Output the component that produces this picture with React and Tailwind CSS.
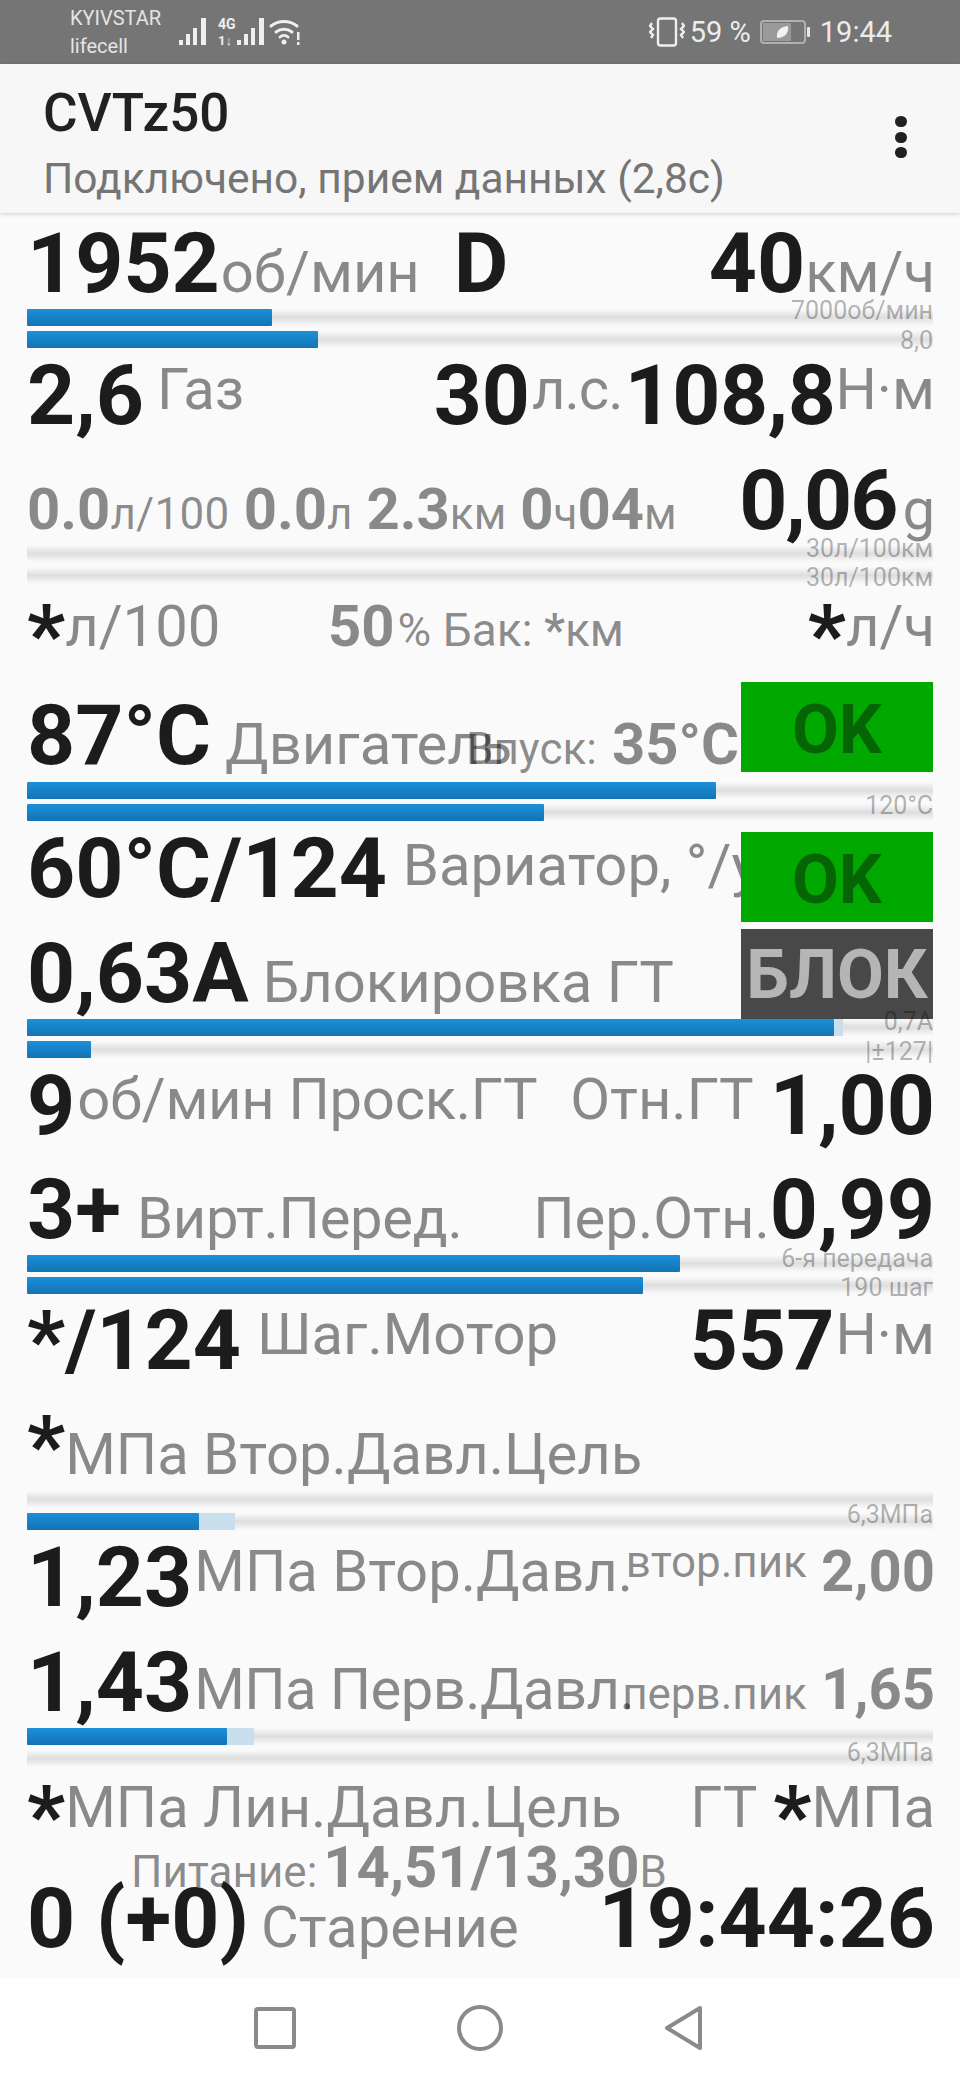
const Big = ({ children, className = "" }) => (
  <span className={`font-bold text-[84px] leading-[0] text-[#1c1c1c] ${className}`}>{children}</span>
);

const Unit = ({ children, className = "" }) => (
  <span className={`text-[58px] leading-[0] text-black/45 ${className}`}>{children}</span>
);

const Muted = ({ children, className = "" }) => (
  <span className={`font-bold text-[58px] leading-[0] text-black/45 ${className}`}>{children}</span>
);

const Small = ({ children, className = "" }) => (
  <span className={`text-[44px] leading-[0] text-black/45 ${className}`}>{children}</span>
);

const Row = ({ className = "", children }) => (
  <div
    className={`relative flex shrink-0 items-baseline justify-between whitespace-nowrap pl-[27px] pr-[25px] text-[84px] leading-[60px] ${className}`}
  >
    {children}
  </div>
);

const Status = ({ label, tone = "bg-[#00a800] text-[#056505] pt-[5px]", className = "" }) => (
  <div
    className={`absolute right-[27px] z-10 flex h-[90px] w-[192px] items-center justify-center text-[68px] font-bold leading-none ${tone} ${className}`}
  >
    {label}
  </div>
);

const Bar = ({ value, ghost, note, noteClass = "" }) => (
  <div className="relative h-[17px] bg-linear-to-b from-transparent via-[#dedede] to-transparent">
    {ghost ? (
      <div className="absolute inset-y-0 left-0 bg-[#c9dfee]" style={{ width: ghost }} />
    ) : null}
    {value ? (
      <div
        className="absolute inset-y-0 left-0 rounded-[1px] bg-linear-to-b from-[#1b90da] to-[#1473b4]"
        style={{ width: value }}
      />
    ) : null}
    {note ? (
      <span
        className={`absolute right-0 z-20 text-[25px] leading-none text-black/30 ${noteClass}`}
      >
        {note}
      </span>
    ) : null}
  </div>
);

const Bars = ({ children }) => (
  <div className="flex h-[39px] shrink-0 flex-col justify-between pl-[27px] pr-[27px]">{children}</div>
);

const StatusBar = () => (
  <div className="flex h-[64px] shrink-0 items-center justify-between bg-[#757575] pl-[70px] pr-[68px] text-[#ececec]">
    <div className="flex items-center">
      <div className="w-[108px] text-[20px] leading-[28px] text-[#e4e4e4]">
        <div>KYIVSTAR</div>
        <div>lifecell</div>
      </div>
      <svg width="126" height="30" viewBox="0 0 126 30" fill="#efefef">
        <rect x="1" y="23" width="4" height="5" />
        <rect x="8" y="17" width="4" height="11" />
        <rect x="15" y="11" width="4" height="17" />
        <rect x="23" y="1" width="5" height="27" />
        <text x="40" y="12" fontSize="14" fontWeight="700" fontFamily="Roboto">4G</text>
        <text x="40" y="28" fontSize="13" fontWeight="700" fontFamily="Roboto">1↓</text>
        <rect x="59" y="23" width="4" height="5" />
        <rect x="66" y="17" width="4" height="11" />
        <rect x="73" y="11" width="4" height="17" />
        <rect x="81" y="1" width="5" height="27" />
        <g fill="none" stroke="#efefef" strokeWidth="3" strokeLinecap="round">
          <path d="M93 9a21 21 0 0 1 26 0" />
          <path d="M98 15a13 13 0 0 1 16 0" />
          <path d="M102 20a6 6 0 0 1 8 0" />
        </g>
        <circle cx="106" cy="25" r="2.5" />
        <rect x="119" y="15" width="2.5" height="8" />
        <rect x="119" y="25" width="2.5" height="3" />
      </svg>
    </div>
    <div className="flex items-center text-[29px] leading-none">
      <svg width="36" height="30" viewBox="0 0 36 30" fill="none" stroke="#efefef" strokeWidth="2.4">
        <rect x="9" y="1.5" width="18" height="27" rx="2.5" />
        <path d="M3 6l-2 3 3 3-3 3 3 3-2 3" />
        <path d="M33 6l2 3-3 3 3 3-3 3 2 3" />
      </svg>
      <span className="ml-[5px]">59 %</span>
      <svg className="ml-[9px]" width="50" height="24" viewBox="0 0 50 24">
        <rect x="1" y="1" width="44" height="22" rx="3" fill="none" stroke="#b0b0b0" strokeWidth="2" />
        <rect x="3" y="3" width="28" height="18" fill="#9a9a9a" />
        <rect x="47" y="7" width="3" height="10" rx="1" fill="#e8e8e8" />
        <path d="M17 18c-1-7 3-11 11-12 1 7-3 12-11 12z" fill="#f2f2f2" />
      </svg>
      <span className="ml-[10px]">19:44</span>
    </div>
  </div>
);

const Toolbar = () => (
  <div className="relative z-30 flex h-[149px] shrink-0 justify-between bg-[#f7f7f7] pl-[43px] pr-[53px] pt-[21px] shadow-[0_1px_4px_rgba(0,0,0,0.18)]">
    <div>
      <div className="text-[53px] font-medium leading-[56px] text-[#212121]">CVTz50</div>
      <div className="mt-[15px] text-[42.5px] leading-[46px] text-[#757575]">
        Подключено, прием данных (2,8с)
      </div>
    </div>
    <div className="mt-[31px] flex h-[42px] w-[12px] flex-col justify-between">
      <div className="h-[11px] rounded-full bg-[#212121]" />
      <div className="h-[11px] rounded-full bg-[#212121]" />
      <div className="h-[11px] rounded-full bg-[#212121]" />
    </div>
  </div>
);

const NavBar = () => (
  <div className="flex h-[102px] shrink-0 bg-white pl-[253px] pt-[27px]">
    <svg width="460" height="46" viewBox="0 0 460 46" fill="none" stroke="#8a8a8a" strokeWidth="4">
      <rect x="3" y="4" width="38" height="38" rx="2" />
      <circle cx="227" cy="23" r="21" />
      <path d="M447 3L414 23l33 20z" strokeLinejoin="round" />
    </svg>
  </div>
);

export default function App() {
  return (
    <div
      className="flex h-[2080px] w-[960px] flex-col overflow-hidden bg-[#fafafa]"
      style={{ fontFamily: "Roboto, sans-serif" }}
    >
      <StatusBar />
      <Toolbar />

      <Row className="h-[96px] pt-[21px]">
        <div>
          <Big>1952</Big>
          <Unit className="ml-[1px]">об/мин</Unit>
          <Big className="ml-[34px]">D</Big>
        </div>
        <div>
          <Big>40</Big>
          <Unit>км/ч</Unit>
        </div>
      </Row>
      <Bars>
        <Bar value="245px" note="7000об/мин" noteClass="top-[-11px]" />
        <Bar value="291px" note="8,0" noteClass="top-[-3px]" />
      </Bars>

      <Row className="h-[123px] pt-[18px]">
        <div>
          <Big>2,6</Big>
          <Unit className="ml-[13px] align-[15px]">Газ</Unit>
        </div>
        <div>
          <Big>30</Big>
          <Unit className="ml-[2px] align-[15px] tracking-[-1px]">л.с.</Unit>
          <Big className="ml-[2px] tracking-[-0.5px]">108,8</Big>
          <Unit className="align-[15px]">Н·м</Unit>
        </div>
      </Row>

      <Row className="h-[74px]">
        <div>
          <Muted>0.0</Muted>
          <Small className="tracking-[0.3px]">л/100</Small>
          <Muted className="ml-[14px]">0.0</Muted>
          <Small>л</Small>
          <Muted className="ml-[14px]">2.3</Muted>
          <Small>км</Small>
          <Muted className="ml-[14px]">0</Muted>
          <Small>ч</Small>
          <Muted>04</Muted>
          <Small>м</Small>
        </div>
        <div>
          <Big className="tracking-[-2px]">0,06</Big>
          <Unit className="ml-[6px]">g</Unit>
        </div>
      </Row>
      <Bars>
        <Bar note="30л/100км" noteClass="top-[-9px]" />
        <Bar note="30л/100км" noteClass="top-[-2px]" />
      </Bars>

      <Row className="h-[122px] pt-[4px]">
        <div>
          <Big className="align-[-17px]">*</Big>
          <Unit>л/100</Unit>
        </div>
        <div className="absolute left-[328px]">
          <Muted>50</Muted>
          <Small className="ml-[3px] text-[46px]">
            % Бак: <b className="font-bold">*</b>км
          </Small>
        </div>
        <div>
          <Big className="align-[-17px]">*</Big>
          <Unit>л/ч</Unit>
        </div>
      </Row>

      <Row className="h-[76px]">
        <div>
          <Big>87°C</Big>
          <Unit className="ml-[14px]">Двигатель</Unit>
        </div>
        <div className="absolute right-[221px]">
          <Small>Впуск:</Small>
          <Muted className="ml-[15px]">35°C</Muted>
        </div>
        <Status label="OK" className="top-[-24px]" />
      </Row>
      <Bars>
        <Bar value="689px" note="" />
        <Bar value="517px" note="120°C" noteClass="top-[-11px]" />
      </Bars>

      <Row className="h-[123px] pt-[18px]">
        <div>
          <Big>60°C/124</Big>
          <Unit className="ml-[16px] align-[12px]">Вариатор, °/у</Unit>
        </div>
        <Status label="OK" className="top-[11px]" />
      </Row>

      <Row className="h-[75px]">
        <div>
          <Big>0,63A</Big>
          <Unit className="ml-[14px]">Блокировка ГТ</Unit>
        </div>
        <Status label="БЛОК" tone="bg-[#484848] text-[#b5b5b5] pt-[2px]" className="top-[-15px]" />
      </Row>
      <Bars>
        <Bar value="807px" ghost="816px" note="0,7A" noteClass="top-[-10px]" />
        <Bar value="64px" note="|±127|" noteClass="top-[-2px]" />
      </Bars>

      <Row className="h-[122px] pt-[18px]">
        <div>
          <Big>9</Big>
          <Unit className="ml-[2px] align-[15px] tracking-[-0.3px]">об/мин Проск.ГТ</Unit>
        </div>
        <div>
          <Unit className="align-[15px]">Отн.ГТ</Unit>
          <Big className="ml-[16px]">1,00</Big>
        </div>
      </Row>

      <Row className="h-[75px]">
        <div>
          <Big>3+</Big>
          <Unit className="ml-[16px] tracking-[-0.3px]">Вирт.Перед.</Unit>
        </div>
        <div>
          <Unit>Пер.Отн.</Unit>
          <Big>0,99</Big>
        </div>
      </Row>
      <Bars>
        <Bar value="653px" note="6-я передача" noteClass="top-[-9px]" />
        <Bar value="616px" note="190 шаг" noteClass="top-[-2px]" />
      </Bars>

      <Row className="h-[122px] pt-[17px]">
        <div>
          <Big>*/124</Big>
          <Unit className="ml-[16px] align-[15px]">Шаг.Мотор</Unit>
        </div>
        <div>
          <Big>557</Big>
          <Unit className="ml-[1px] align-[15px]">Н·м</Unit>
        </div>
      </Row>

      <Row className="h-[75px]">
        <div>
          <Big>*</Big>
          <Unit>МПа Втор.Давл.Цель</Unit>
        </div>
      </Row>
      <Bars>
        <Bar />
        <Bar value="172px" ghost="208px" note="6,3МПа" noteClass="top-[-11px]" />
      </Bars>

      <Row className="h-[123px] pt-[18px]">
        <div>
          <Big>1,23</Big>
          <Unit className="ml-[2px] align-[15px]">МПа Втор.Давл.</Unit>
        </div>
        <div className="absolute right-[25px]">
          <Small className="align-[29px]">втор.пик</Small>
          <Muted className="ml-[14px] align-[15px]">2,00</Muted>
        </div>
      </Row>

      <Row className="h-[75px]">
        <div>
          <Big>1,43</Big>
          <Unit className="ml-[2px] align-[2px] tracking-[-0.6px]">МПа Перв.Давл.</Unit>
        </div>
        <div className="absolute right-[25px]">
          <Small className="align-[2px]">перв.пик</Small>
          <Muted className="ml-[14px] align-[2px]">1,65</Muted>
        </div>
      </Row>
      <Bars>
        <Bar value="200px" ghost="227px" />
        <Bar note="6,3МПа" noteClass="top-[-10px]" />
      </Bars>

      <Row className="h-[122px] pt-[2px]">
        <div>
          <Big className="align-[-17px]">*</Big>
          <Unit>МПа Лин.Давл.Цель</Unit>
        </div>
        <div>
          <Unit>ГТ</Unit>
          <Big className="ml-[16px] align-[-17px]">*</Big>
          <Unit>МПа</Unit>
        </div>
        <div className="absolute left-[131px] top-[62px]">
          <Small>Питание:</Small>
          <Muted className="ml-[6px]">14,51/13,30</Muted>
          <Small>В</Small>
        </div>
      </Row>

      <Row className="h-[89px]">
        <div>
          <Big>0 (+0)</Big>
          <Unit className="ml-[12px]">Старение</Unit>
        </div>
        <div>
          <Big>19:44:26</Big>
        </div>
      </Row>

      <NavBar />
    </div>
  );
}
